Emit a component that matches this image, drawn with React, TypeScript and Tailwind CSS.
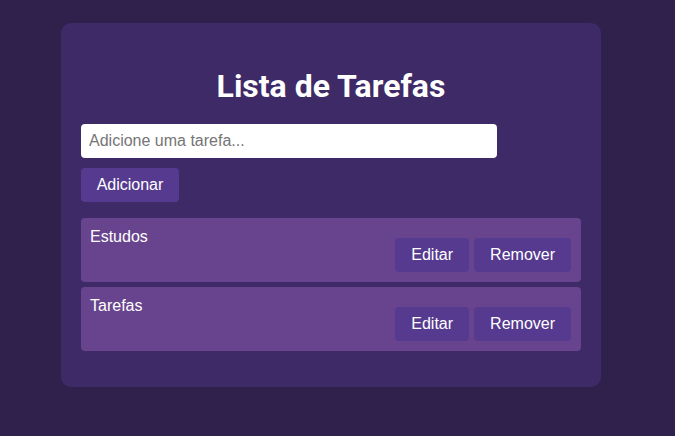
const tasks = ['Estudos', 'Tarefas']

function TaskItem({ name }: { name: string }) {
    return (
        <li className="flex items-start justify-between rounded-[4px] bg-[#68448e] p-[10px] pl-[9px]">
            <span className="leading-[18px] text-white">{name}</span>
            <div className="mt-[10px] flex gap-[5px]">
                <button className="h-[34px] rounded-[4px] bg-[#553a8f] px-[16px] text-white" type="button">
                    Editar
                </button>
                <button className="h-[34px] rounded-[4px] bg-[#553a8f] px-[16px] text-white" type="button">
                    Remover
                </button>
            </div>
        </li>
    )
}

export default function App() {
    return (
        <div className="min-h-screen bg-[#30204c] pl-[61px] pt-[23px] font-['Liberation_Sans',Arial,sans-serif] text-[16px]">
            <div className="w-[540px] rounded-[10px] bg-[#3e2a67] px-[20px] pb-[36px] pt-[45px]">
                <h1 className="text-center font-['Roboto',sans-serif] text-[32px] font-bold leading-[37px] text-white">
                    Lista de Tarefas
                </h1>
                <input
                    className="mt-[19px] block h-[34px] w-[416px] rounded-[4px] bg-white px-[8px] text-[16px] text-black outline-none placeholder:text-[#757575]"
                    placeholder="Adicione uma tarefa..."
                    type="text"
                />
                <button className="mt-[10px] h-[34px] w-[98px] rounded-[4px] bg-[#553a8f] text-white" type="button">
                    Adicionar
                </button>
                <ul className="mt-[16px] flex flex-col gap-[5px]">
                    {tasks.map((t) => (
                        <TaskItem key={t} name={t} />
                    ))}
                </ul>
            </div>
        </div>
    )
}
